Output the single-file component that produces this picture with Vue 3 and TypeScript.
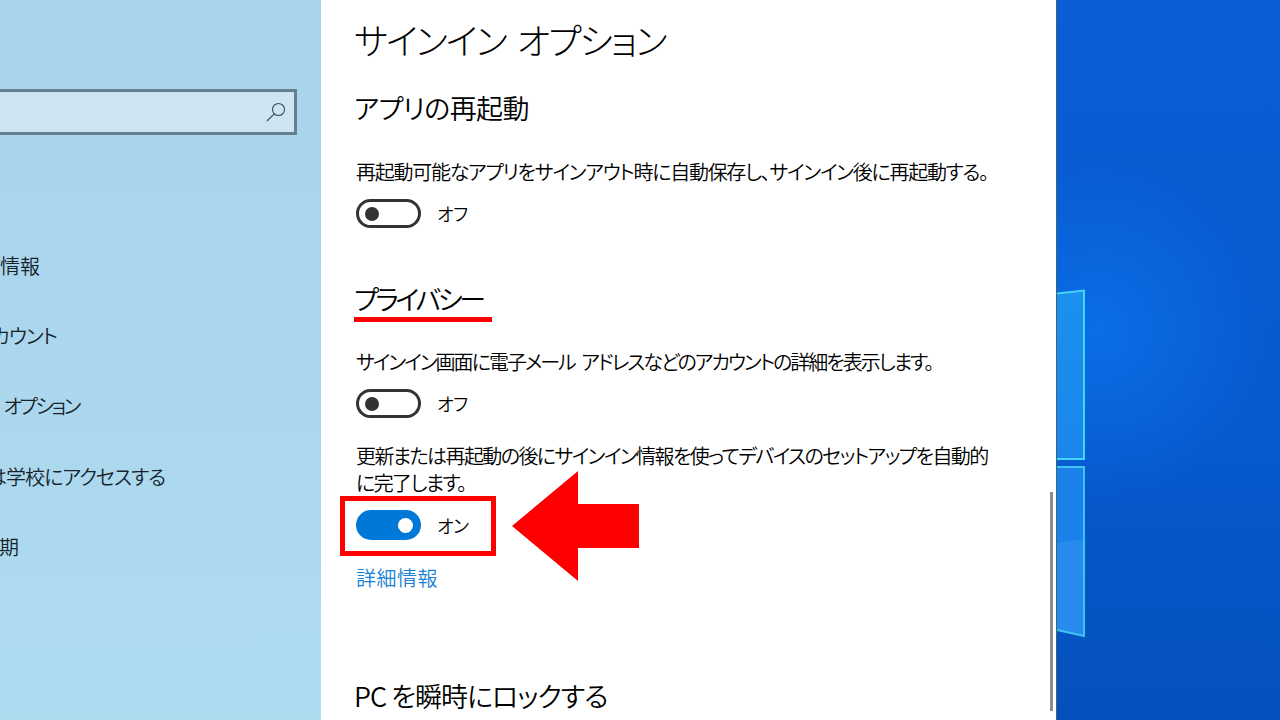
<script setup lang="ts">
interface NavItem {
  label: string
  end: number // 右端の x 座標
  spacing: number
}

const navItems: NavItem[] = [
  { label: 'ユーザーの情報', end: 40, spacing: 0 },
  { label: 'メール & アカウント', end: 57, spacing: -1 },
  { label: 'サインイン オプション', end: 79, spacing: -2.5 },
  { label: '職場または学校にアクセスする', end: 165, spacing: -1 },
  { label: '同期', end: 19, spacing: 0 }
]
</script>

<template>
  <div class="screen">
    <aside class="sidebar">
      <div class="search">
        <svg class="search-icon" viewBox="0 0 20 20" width="20" height="20">
          <circle cx="12.5" cy="7.500" r="6" fill="none" stroke="#3f4f59" stroke-width="1.1" />
          <path d="M8.200 11.800 1 19" fill="none" stroke="#3f4f59" stroke-width="1.2" />
        </svg>
      </div>
      <nav class="nav">
        <div
          v-for="item in navItems"
          :key="item.label"
          class="nav-item"
          :style="{ width: item.end + 'px', letterSpacing: item.spacing + 'px' }"
        >
          <span>{{ item.label }}</span>
        </div>
      </nav>
    </aside>

    <main class="content">
      <h1 class="title">サインイン オプション</h1>

      <h2 class="heading first">アプリの再起動</h2>
      <p class="text first-text">再起動可能なアプリをサインアウト時に自動保存し、サインイン後に再起動する。</p>
      <div class="switch-row">
        <span class="switch"><span class="knob"></span></span>
        <span class="switch-label">オフ</span>
      </div>

      <h2 class="heading privacy">プライバシー</h2>
      <p class="text email-text">サインイン画面に電子メール アドレスなどのアカウントの詳細を表示します。</p>
      <div class="switch-row">
        <span class="switch"><span class="knob"></span></span>
        <span class="switch-label">オフ</span>
      </div>

      <p class="text setup-text">更新または再起動の後にサインイン情報を使ってデバイスのセットアップを自動的に完了します。</p>
      <div class="marked">
        <div class="switch-row">
          <span class="switch on"><span class="knob"></span></span>
          <span class="switch-label">オン</span>
        </div>
        <svg class="arrow" viewBox="0 0 127 110" width="127" height="110">
          <path d="M0 55 66 0V33H127V77H66V110Z" fill="#ff0000" />
        </svg>
      </div>
      <a class="link">詳細情報</a>

      <h2 class="heading lock">PC を瞬時にロックする</h2>

      <div class="scrollbar"></div>
    </main>

    <section class="desktop">
      <svg class="logo" viewBox="0 0 40 360" width="40" height="360">
        <defs>
          <linearGradient id="pane" x1="0" y1="0" x2="0" y2="1">
            <stop offset="0" stop-color="#1b90ee" />
            <stop offset="1" stop-color="#1a86ec" />
          </linearGradient>
        </defs>
        <path d="M0 4.500 27 1.500V170H0Z" fill="url(#pane)" />
        <path d="M0 178H27V347L0 341Z" fill="#1a80ea" />
        <path d="M0 254 27 250V347L0 341Z" fill="#278bee" />
        <path d="M0 4.500 27 1.500V170H0" fill="none" stroke="#45d4f6" stroke-width="2" />
        <path d="M0 178H27V347L0 341" fill="none" stroke="#3fc4f2" stroke-width="2" />
      </svg>
    </section>
  </div>
</template>

<style scoped>
.screen {
  display: flex;
  width: 1280px;
  height: 720px;
  overflow: hidden;
  font-family: "Noto Sans CJK JP", "Noto Sans", sans-serif;
  font-feature-settings: "palt";
  color: #000;
}

.sidebar {
  width: 321px;
  flex: none;
  overflow: hidden;
  padding-top: 89px;
  box-sizing: border-box;
  background: linear-gradient(180deg, #a9d3eb 0%, #abd6ed 40%, #aedcf1 100%);
}

.search {
  display: flex;
  align-items: center;
  justify-content: flex-end;
  width: 297px;
  height: 46px;
  padding-right: 8px;
  box-sizing: border-box;
  border: 3px solid #64808f;
  border-left: 0;
  background: #cde5f3;
}

.nav {
  display: flex;
  flex-direction: column;
  margin-top: 111px;
}

.nav-item {
  display: flex;
  justify-content: flex-end;
  height: 70.200px;
  line-height: 40px;
  font-size: 20px;
  font-weight: 350;
  white-space: nowrap;
  word-spacing: 7px;
  color: #16232b;
}

.nav-item span {
  flex: none;
}

.content {
  position: relative;
  width: 735px;
  flex: none;
  padding: 14px 0 0 33px;
  box-sizing: border-box;
  background: #fff;
}

.title {
  margin: 0;
  font-size: 36px;
  font-weight: 300;
  line-height: 50px;
  letter-spacing: -1.9px;
  word-spacing: 5px;
}

.heading {
  margin: 0;
  font-size: 27px;
  font-weight: 350;
  line-height: 40px;
}

.heading.first {
  margin-top: 24px;
  letter-spacing: -0.6px;
}

.heading.privacy {
  width: 138px;
  margin-top: 52px;
  line-height: 37px;
  letter-spacing: -3.3px;
  border-bottom: 5px solid #ff0000;
}

.heading.lock {
  margin-top: 84px;
  letter-spacing: -1px;
}

.text {
  margin: 0 0 0 2px;
  max-width: 640px;
  font-size: 20px;
  font-weight: 350;
  line-height: 27px;
}

.first-text {
  margin-top: 30px;
  letter-spacing: -1.27px;
}

.email-text {
  margin-top: 26px;
  letter-spacing: -2px;
  word-spacing: 4px;
}

.setup-text {
  margin-top: 24px;
  letter-spacing: -1.6px;
}

.switch-row {
  display: flex;
  align-items: center;
  margin: 14px 0 0 2px;
}

.switch {
  display: flex;
  align-items: center;
  width: 65px;
  height: 29px;
  padding-left: 6px;
  box-sizing: border-box;
  border: 3px solid #333;
  border-radius: 15px;
}

.knob {
  width: 14px;
  height: 14px;
  border-radius: 50%;
  background: #333;
}

.switch.on {
  justify-content: flex-end;
  height: 30px;
  padding: 0 5px 0 0;
  border-color: #0078d7;
  background: #0078d7;
}

.switch.on .knob {
  width: 15px;
  height: 15px;
  background: #fff;
}

.switch-label {
  margin-left: 16px;
  font-size: 18px;
  font-weight: 350;
  line-height: 29px;
  letter-spacing: -0.5px;
}

.marked {
  position: relative;
  width: 156px;
  height: 60px;
  margin: 0 0 0 -14px;
  padding: 0 0 0 11px;
  box-sizing: border-box;
  border: 5px solid #ff0000;
}

.marked .switch-row {
  margin: 9px 0 0;
}

.arrow {
  position: absolute;
  left: 167px;
  top: -30px;
}

.link {
  display: block;
  margin: 8px 0 0 2px;
  font-size: 20px;
  font-weight: 350;
  line-height: 28px;
  letter-spacing: 0.5px;
  color: #1a82d6;
}

.scrollbar {
  position: absolute;
  left: 729px;
  top: 492px;
  width: 3px;
  height: 219px;
  background: #8c8c8c;
}

.desktop {
  position: relative;
  flex: 1;
  border-left: 1px solid #3d6478;
  background:
    radial-gradient(circle at 40px 330px, #0a6ee6 0%, rgba(10, 110, 230, 0) 170px),
    linear-gradient(180deg, #0a5dd4 0%, #0759cf 60%, #0550bd 100%);
}

.logo {
  position: absolute;
  left: 0;
  top: 289px;
}
</style>
<style>
html,
body {
  margin: 0;
}
</style>
